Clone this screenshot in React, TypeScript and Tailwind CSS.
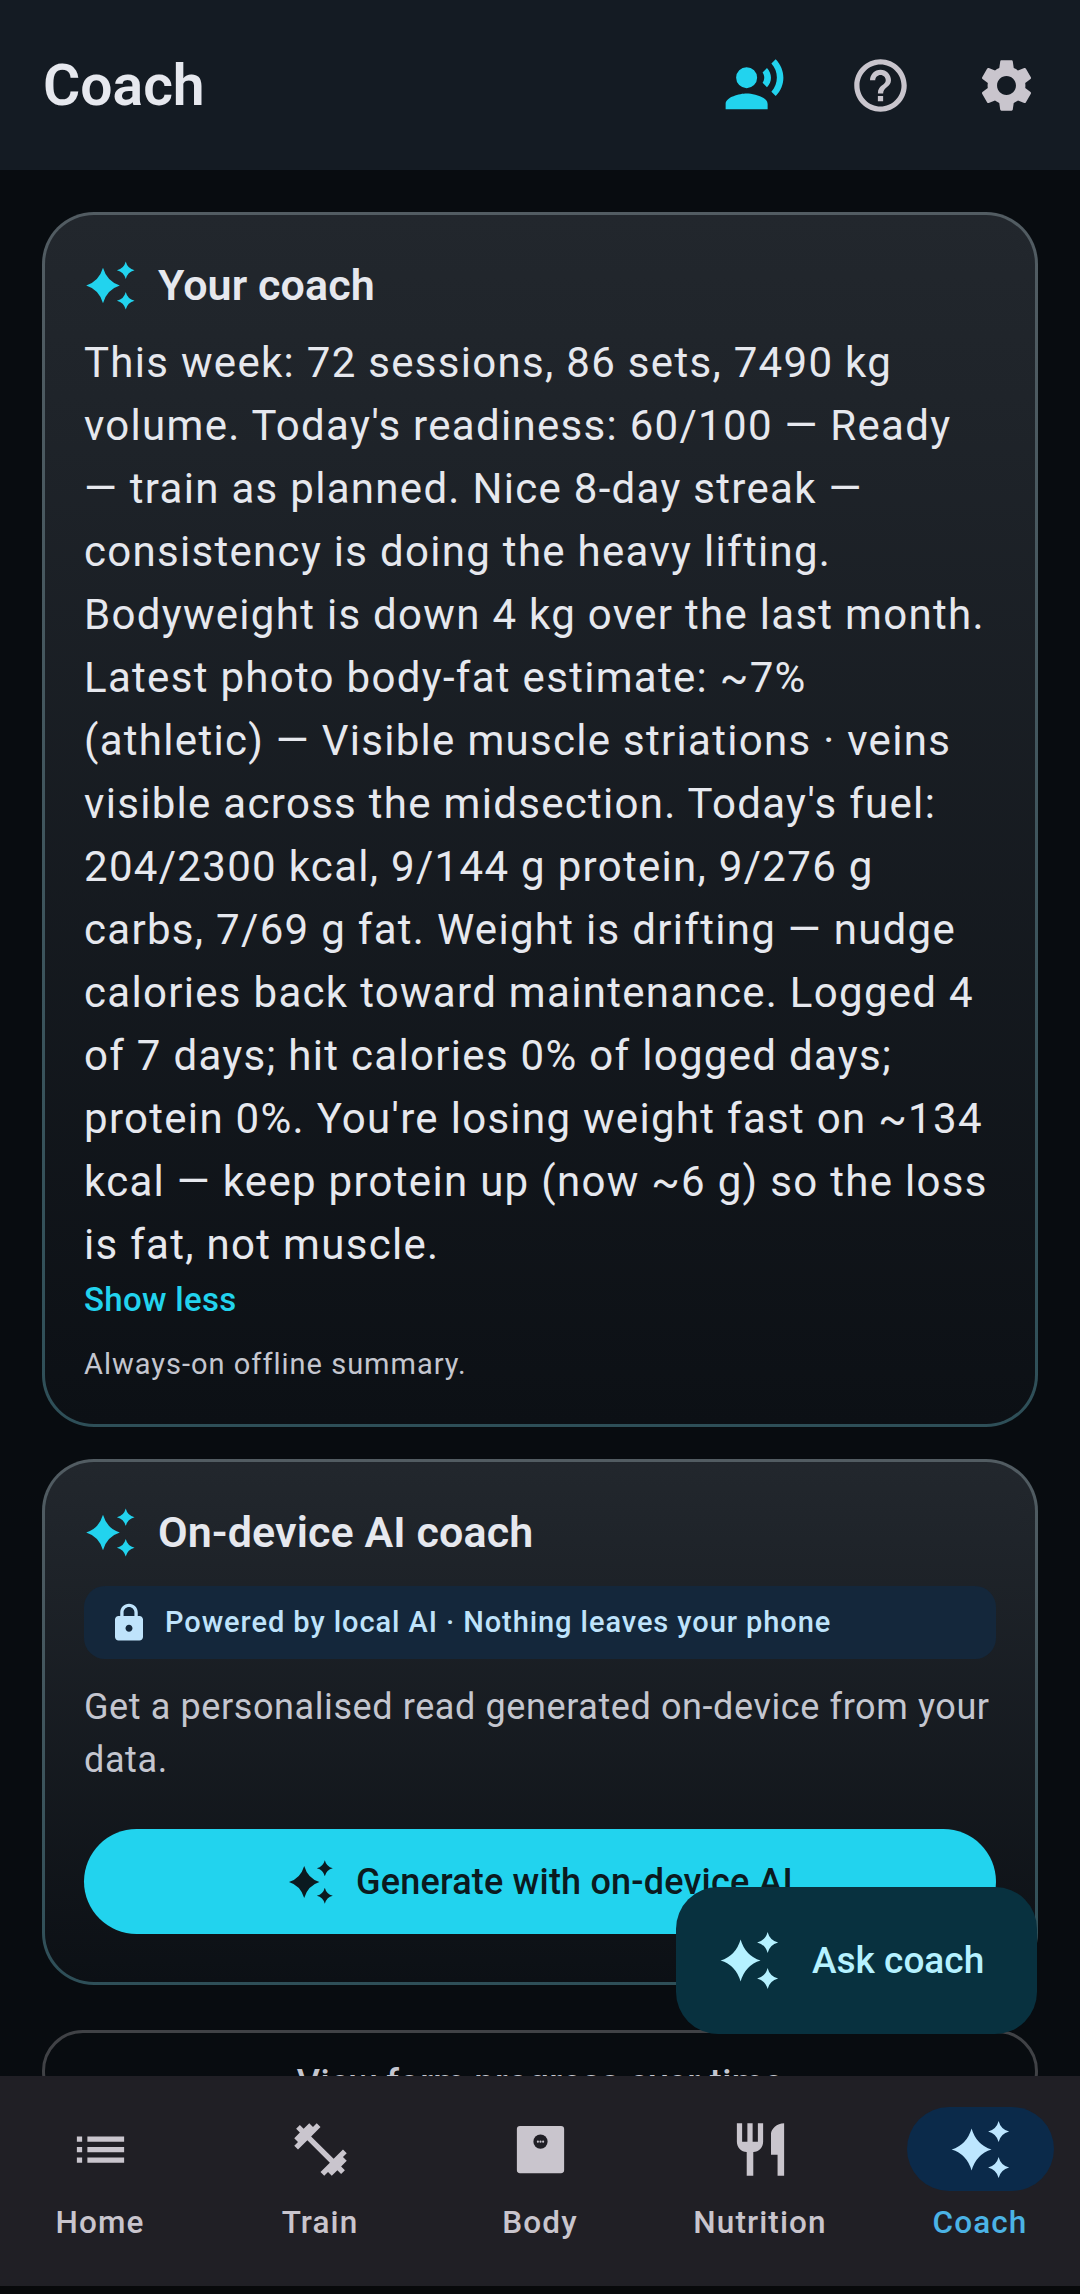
import React from 'react';

const paths = {
  voice:
    'M9 13a4 4 0 1 0 0-8 4 4 0 0 0 0 8zM9 15c-2.67 0-8 1.34-8 4v2h16v-2c0-2.66-5.33-4-8-4zm7.76-9.64l-1.68 1.69c.84 1.18.84 2.71 0 3.89l1.68 1.69c2.02-2.02 2.02-5.07 0-7.27zM20.07 2l-1.63 1.63c2.77 3.02 2.77 7.56 0 10.74L20.07 16c3.9-3.89 3.91-9.95 0-14z',
  help:
    'M11 18h2v-2h-2v2zm1-16C6.48 2 2 6.48 2 12s4.48 10 10 10 10-4.48 10-10S17.52 2 12 2zm0 18c-4.41 0-8-3.59-8-8s3.59-8 8-8 8 3.59 8 8-3.59 8-8 8zm0-14c-2.21 0-4 1.79-4 4h2c0-1.1.9-2 2-2s2 .9 2 2c0 2-3 1.75-3 5h2c0-2.25 3-2.5 3-5 0-2.21-1.79-4-4-4z',
  settings:
    'M19.14 12.94c.04-.3.06-.61.06-.94 0-.32-.02-.64-.07-.94l2.03-1.58c.18-.14.23-.41.12-.61l-1.92-3.32c-.12-.22-.37-.29-.59-.22l-2.39.96c-.5-.38-1.03-.7-1.62-.94l-.36-2.54c-.04-.24-.24-.41-.48-.41h-3.84c-.24 0-.43.17-.47.41l-.36 2.54c-.59.24-1.13.57-1.62.94l-2.39-.96c-.22-.08-.47 0-.59.22L2.74 8.87c-.12.21-.08.47.12.61l2.03 1.58c-.05.3-.09.63-.09.94s.02.64.07.94l-2.03 1.58c-.18.14-.23.41-.12.61l1.92 3.32c.12.22.37.29.59.22l2.39-.96c.5.38 1.03.7 1.62.94l.36 2.54c.05.24.24.41.48.41h3.84c.24 0 .44-.17.47-.41l.36-2.54c.59-.24 1.13-.56 1.62-.94l2.39.96c.22.08.47 0 .59-.22l1.92-3.32c.12-.22.07-.47-.12-.61l-2.01-1.58zM12 15.6c-1.98 0-3.6-1.62-3.6-3.6s1.62-3.6 3.6-3.6 3.6 1.62 3.6 3.6-1.62 3.6-3.6 3.6z',
  lock:
    'M18 8h-1V6c0-2.76-2.24-5-5-5S7 3.24 7 6v2H6c-1.1 0-2 .9-2 2v10c0 1.1.9 2 2 2h12c1.1 0 2-.9 2-2V10c0-1.1-.9-2-2-2zm-6 9c-1.1 0-2-.9-2-2s.9-2 2-2 2 .9 2 2-.9 2-2 2zm3.1-9H8.9V6c0-1.71 1.39-3.1 3.1-3.1 1.71 0 3.1 1.39 3.1 3.1v2z',
  list: 'M3 13h2v-2H3v2zm0 4h2v-2H3v2zm0-8h2V7H3v2zm4 4h14v-2H7v2zm0 4h14v-2H7v2zM7 7v2h14V7H7z',
  train:
    'M20.57 14.86L22 13.43 20.57 12 17 15.57 8.43 7 12 3.43 10.57 2 9.14 3.43 7.71 2 5.57 4.14 4.14 2.71 2.71 4.14l1.43 1.43L2 7.71l1.43 1.43L2 10.57 3.43 12 7 8.43 15.57 17 12 20.57 13.43 22l1.43-1.43L16.29 22l2.14-2.14 1.43 1.43 1.43-1.43-1.43-1.43L22 16.29z',
  food: 'M11 9H9V2H7v7H5V2H3v7c0 2.12 1.66 3.84 3.75 3.97V22h2.5v-9.03C11.34 12.84 13 11.12 13 9V2h-2v7zm5-3v8h2.5v8H21V2c-2.76 0-5 2.24-5 4z',
  sparkle:
    'M8.6 4Q10.400 10.200 16.200 12Q10.400 13.800 8.600 20Q6.800 13.800 1 12Q6.800 10.200 8.600 4ZM18.900 1.100Q19.700 4.300 22.900 5.100Q19.700 5.900 18.900 9.100Q18.100 5.900 14.900 5.100Q18.100 4.300 18.900 1.100ZM18.900 14.900Q19.700 18.100 22.900 18.900Q19.700 19.700 18.900 22.900Q18.100 19.700 14.900 18.900Q18.100 18.100 18.900 14.900Z',
};

function Icon({ d, className }: { d: string; className?: string }) {
  return (
    <svg viewBox="0 0 24 24" fill="currentColor" className={className}>
      <path d={d} />
    </svg>
  );
}

function WeightIcon({ className }: { className?: string }) {
  return (
    <svg viewBox="0 0 24 24" className={className}>
      <rect x="3" y="3" width="18" height="18" rx="1.2" fill="currentColor" />
      <circle cx="12" cy="9" r="2.7" fill="#201f25" />
      <circle cx="11" cy="9" r="0.4" fill="currentColor" />
      <circle cx="12" cy="9" r="0.4" fill="currentColor" />
      <circle cx="13" cy="9" r="0.4" fill="currentColor" />
    </svg>
  );
}

const cardClass =
  'rounded-[52px] border-[3px] border-transparent [background:linear-gradient(180deg,#22272d_0%,#1f242a_15%,#0c1015_100%)_padding-box,linear-gradient(180deg,#525c62_0%,#2e4f58_100%)_border-box]';

function CardTitle({ children }: { children: React.ReactNode }) {
  return (
    <div className="flex items-center gap-[21px]">
      <Icon d={paths.sparkle} className="h-[53px] w-[53px] text-[#22d3ee]" />
      <h2 className="text-[43px] leading-[63px] font-semibold tracking-[0.1px] text-[#e6e8ee]">{children}</h2>
    </div>
  );
}

const navItems = [
  { label: 'Home', icon: <Icon d={paths.list} className="h-[63px] w-[63px]" /> },
  { label: 'Train', icon: <Icon d={paths.train} className="h-[63px] w-[63px]" /> },
  { label: 'Body', icon: <WeightIcon className="h-[63px] w-[63px]" /> },
  { label: 'Nutrition', icon: <Icon d={paths.food} className="h-[63px] w-[63px]" /> },
];

export default function App() {
  return (
    <div className="relative flex h-[2294px] w-[1080px] flex-col overflow-hidden bg-[#080c10] font-['Roboto',sans-serif]">
      <header className="flex h-[170px] shrink-0 items-center justify-between bg-[#141b23] pt-[1px] pr-[11px] pl-[43px]">
        <h1 className="text-[57px] leading-[76px] font-semibold text-[#e6e8ee]">Coach</h1>
        <div className="flex text-[#c9c5cd]">
          <button className="flex h-[126px] w-[126px] items-center justify-center text-[#22d3ee]">
            <Icon d={paths.voice} className="h-[63px] w-[63px]" />
          </button>
          <button className="flex h-[126px] w-[126px] items-center justify-center">
            <Icon d={paths.help} className="h-[63px] w-[63px]" />
          </button>
          <button className="flex h-[126px] w-[126px] items-center justify-center">
            <Icon d={paths.settings} className="h-[63px] w-[63px]" />
          </button>
        </div>
      </header>

      <main className="flex-1 overflow-hidden px-[42px] pt-[42px]">
        <section className={`${cardClass} px-[39px] pt-[39px] pb-[39px]`}>
          <CardTitle>Your coach</CardTitle>
          <p className="mt-[14px] text-[42px] leading-[63px] tracking-[1.3px] text-[#e6e8ee]">
            This week: 72 sessions, 86 sets, 7490 kg volume. Today's readiness: 60/100 — Ready — train as planned. Nice
            8-day streak — consistency is doing the heavy lifting. Bodyweight is down 4 kg over the last month. Latest
            photo body-fat estimate: ~7% (athletic) — Visible muscle striations · veins visible across the midsection.
            Today's fuel: 204/2300 kcal, 9/144 g protein, 9/276 g carbs, 7/69 g fat. Weight is drifting — nudge calories
            back toward maintenance. Logged 4 of 7 days; hit calories 0% of logged days; protein 0%. You're losing weight
            fast on ~134 kcal — keep protein up (now ~6 g) so the loss is fat, not muscle.
          </p>
          <button className="mt-[3px] block text-[33px] leading-[42px] font-medium tracking-[0.3px] text-[#22d3ee]">
            Show less
          </button>
          <p className="mt-[22px] text-[29px] leading-[42px] tracking-[1px] text-[#c4c6cf]">Always-on offline summary.</p>
        </section>

        <section className={`${cardClass} mt-[32px] px-[39px] pt-[39px] pb-[48px]`}>
          <CardTitle>On-device AI coach</CardTitle>
          <div className="mt-[22px] flex h-[73px] items-center gap-[15px] rounded-[21px] bg-[#14273b] px-[24px] text-[#bfe3fb]">
            <Icon d={paths.lock} className="h-[42px] w-[42px]" />
            <span className="text-[29px] font-medium tracking-[0.93px]">Powered by local AI · Nothing leaves your phone</span>
          </div>
          <p className="mt-[22px] text-[36px] leading-[52.5px] tracking-[0.6px] text-[#c4c6cf]">
            Get a personalised read generated on-device from your data.
          </p>
          <button className="mt-[43px] flex h-[105px] w-full items-center justify-center gap-[21px] rounded-full bg-[#22d3ee] text-[#0b1a20]">
            <Icon d={paths.sparkle} className="h-[48px] w-[48px]" />
            <span className="text-[36px] font-medium tracking-[0.2px]">Generate with on-device AI</span>
          </button>
        </section>

        <section className="mt-[45px] rounded-[52px] border-[3px] border-[#404246] pt-[24px] text-center">
          <p className="text-[36px] leading-[52px] font-medium tracking-[0.4px] text-[#c4c6cf]">View form progress over time</p>
        </section>
      </main>

      <button className="absolute top-[1887px] left-[676px] flex h-[147px] w-[361px] items-center gap-[31px] rounded-[42px] bg-[#08313f] pl-[42px] text-[#b5f1ff]">
        <Icon d={paths.sparkle} className="h-[63px] w-[63px]" />
        <span className="text-[37px] font-medium">Ask coach</span>
      </button>

      <nav className="flex h-[218px] shrink-0 flex-col bg-[#08090b]">
        <div className="flex h-[210px] justify-center bg-[#201f25] pt-[31px]">
          {navItems.map((item) => (
            <div key={item.label} className="flex w-[220px] shrink-0 flex-col items-center text-[#c9c5cd]">
              <div className="flex h-[84px] w-[147px] items-center justify-center">{item.icon}</div>
              <span className="mt-[11px] text-[31.5px] leading-[42px] font-medium tracking-[1.1px]">{item.label}</span>
            </div>
          ))}
          <div className="flex w-[220px] shrink-0 flex-col items-center">
            <div className="flex h-[84px] w-[147px] items-center justify-center rounded-full bg-[#0b2a4a] text-[#bde6ff]">
              <Icon d={paths.sparkle} className="h-[63px] w-[63px]" />
            </div>
            <span className="mt-[11px] text-[31.5px] leading-[42px] font-medium tracking-[1.1px] text-[#4bb3e6]">Coach</span>
          </div>
        </div>
      </nav>
    </div>
  );
}
